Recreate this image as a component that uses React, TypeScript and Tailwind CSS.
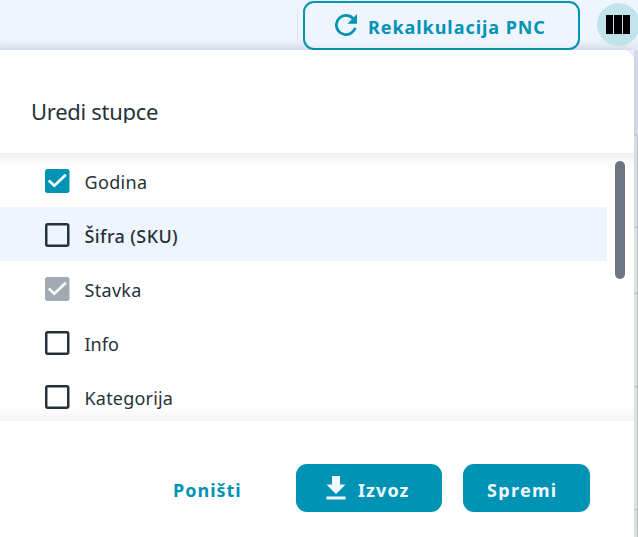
import React from 'react';

type Column = { label: string; state: 'on' | 'off' | 'locked'; spacing: string; active?: boolean };

const columns: Column[] = [
  { label: 'Godina', state: 'on', spacing: 'tracking-[0.35px]' },
  { label: 'Šifra (SKU)', state: 'off', spacing: 'tracking-[0.4px]', active: true },
  { label: 'Stavka', state: 'locked', spacing: 'tracking-[0.3px]' },
  { label: 'Info', state: 'off', spacing: 'tracking-[0px]' },
  { label: 'Kategorija', state: 'off', spacing: 'tracking-[0.2px]' },
];

function Checkbox({ state }: { state: Column['state'] }) {
  if (state === 'off') {
    return (
      <svg viewBox="0 0 25 24" className="mt-px h-6 w-[25px] shrink-0" fill="none" stroke="#263238" strokeWidth="2.5">
        <rect x="1.25" y="1.25" width="22" height="21.500" rx="1.500" />
      </svg>
    );
  }
  return (
    <svg
      viewBox="0 0 25 24"
      className={`mt-px h-6 w-[25px] shrink-0 ${state === 'on' ? 'text-[#0093b5]' : 'text-[#a1a9b3]'}`}
      fill="none"
    >
      <rect width="24.500" height="24" rx="2.500" fill="currentColor" />
      <path d="M3.700 11.500 9.300 16.800 20.800 5.700" stroke="#fff" strokeWidth="2.600" />
    </svg>
  );
}

export default function App() {
  return (
    <div className="flex h-[537px] w-[638px] flex-col overflow-hidden bg-[#eff5ff] font-['Noto_Sans',sans-serif] text-[#263238]">
      <header className="flex h-[50px] shrink-0 items-start bg-linear-to-b from-[#eff5ff] from-75% to-[#e0e7f0] pl-[297px]">
        <span className="mt-[9px] h-8 w-px shrink-0 bg-[#dde8f1]" />
        <button className="mt-px ml-[5px] flex h-[49px] w-[277px] shrink-0 items-center rounded-[11px] border-2 border-[#0093b5] bg-[#eff5ff] pl-[30px] text-[#0093b5]">
          <svg viewBox="4 4 16 16" className="-mt-px size-[22px] shrink-0" fill="currentColor">
            <path d="M17.65 6.35A7.96 7.96 0 0 0 12 4a8 8 0 1 0 7.73 10h-2.08A6 6 0 1 1 12 6c1.66 0 3.14.69 4.22 1.78L13 11h7V4z" />
          </svg>
          <span className="mt-[3px] ml-[11px] text-[18px] leading-6 font-bold tracking-[0.95px] whitespace-nowrap">Rekalkulacija PNC</span>
        </button>
        <button className="mt-[3px] ml-[17px] flex size-[43px] shrink-0 items-center justify-center gap-px rounded-full bg-[#c1e3ec] pr-px">
          <span className="h-[19px] w-[7.5px] bg-black" />
          <span className="h-[19px] w-[7.5px] bg-black" />
          <span className="h-[19px] w-[7.5px] bg-black" />
        </button>
      </header>

      <div className="flex min-h-0 flex-1">
        <section className="z-10 flex w-[633.5px] shrink-0 flex-col overflow-hidden rounded-tr-[11px] bg-white shadow-[0_0_8px_rgba(50,65,85,0.15)]">
          <div className="h-[103px] shrink-0 pt-[46px] pl-[31px]">
            <h2 className="h-[27px] overflow-hidden text-[22px] leading-[31px] tracking-[-0.3px] whitespace-nowrap">
              Uredi stupce
            </h2>
          </div>
          <div className="flex h-[268px] shrink-0 justify-between bg-[linear-gradient(#f1f1f1,#fff_14px,#fff_254px,#f4f4f4)] pr-[9px]">
            <ul className="w-[607px]">
              {columns.map((c) => (
                <li key={c.label} className={`flex h-[54px] items-center pl-[45px] ${c.active ? 'bg-[#eef5ff]' : ''}`}>
                  <Checkbox state={c.state} />
                  <span
                    className={`mt-[3px] ml-[14.5px] text-[18px] leading-[26px] whitespace-nowrap ${c.spacing} ${c.active ? 'font-medium' : ''}`}
                  >
                    {c.label}
                  </span>
                </li>
              ))}
            </ul>
            <span className="mt-2 h-[118px] w-[10px] rounded-full bg-[#6e7681]" />
          </div>
          <footer className="flex flex-1 items-start pt-[43px] pl-[173px] text-[18px] font-bold">
            <button className="flex h-12 w-[123px] items-center text-[#0093b5]">
              <span className="mt-[3px] leading-6 tracking-[1px]">Poništi</span>
            </button>
            <button className="flex h-12 w-[146px] items-center rounded-[11px] bg-[#0093b5] pl-[30px] text-[#eff8ff]">
              <svg viewBox="0 0 20 24" className="h-6 w-5 shrink-0" fill="currentColor">
                <path d="M6 0h8v8.5h5.5L10 18 .5 8.500H6zM.5 20.500h19V23.500H.5z" />
              </svg>
              <span className="mt-[3px] ml-3 leading-6 tracking-[1.1px]">Izvoz</span>
            </button>
            <button className="ml-[21px] h-12 w-[127px] rounded-[11px] bg-[#0093b5] pl-6 text-left text-[#eff8ff]">
              <span className="mt-[1px] block h-[22px] overflow-hidden leading-[25px] tracking-[1.3px]">Spremi</span>
            </button>
          </footer>
        </section>
        <aside className="flex flex-1 flex-col bg-[#d8e0ea] pt-[84px]">
          <div className="h-[93px] rounded-tr-md border-t border-r border-[#c0c5d0] bg-[#e3e5ed]" />
          <div className="h-[66px] border-t border-r border-[#c0c2ca] bg-[#e9e9ed]" />
          <div className="h-[93px] border-t border-r border-[#c0c2ca] bg-[#e9eaec]" />
          <div className="h-[123px] border-t border-r border-[#c0c2ca] bg-[#e9eaec]" />
          <div className="flex-1 border-t border-r border-[#c0c2ca] bg-[#e6e6e6]" />
        </aside>
      </div>
    </div>
  );
}
